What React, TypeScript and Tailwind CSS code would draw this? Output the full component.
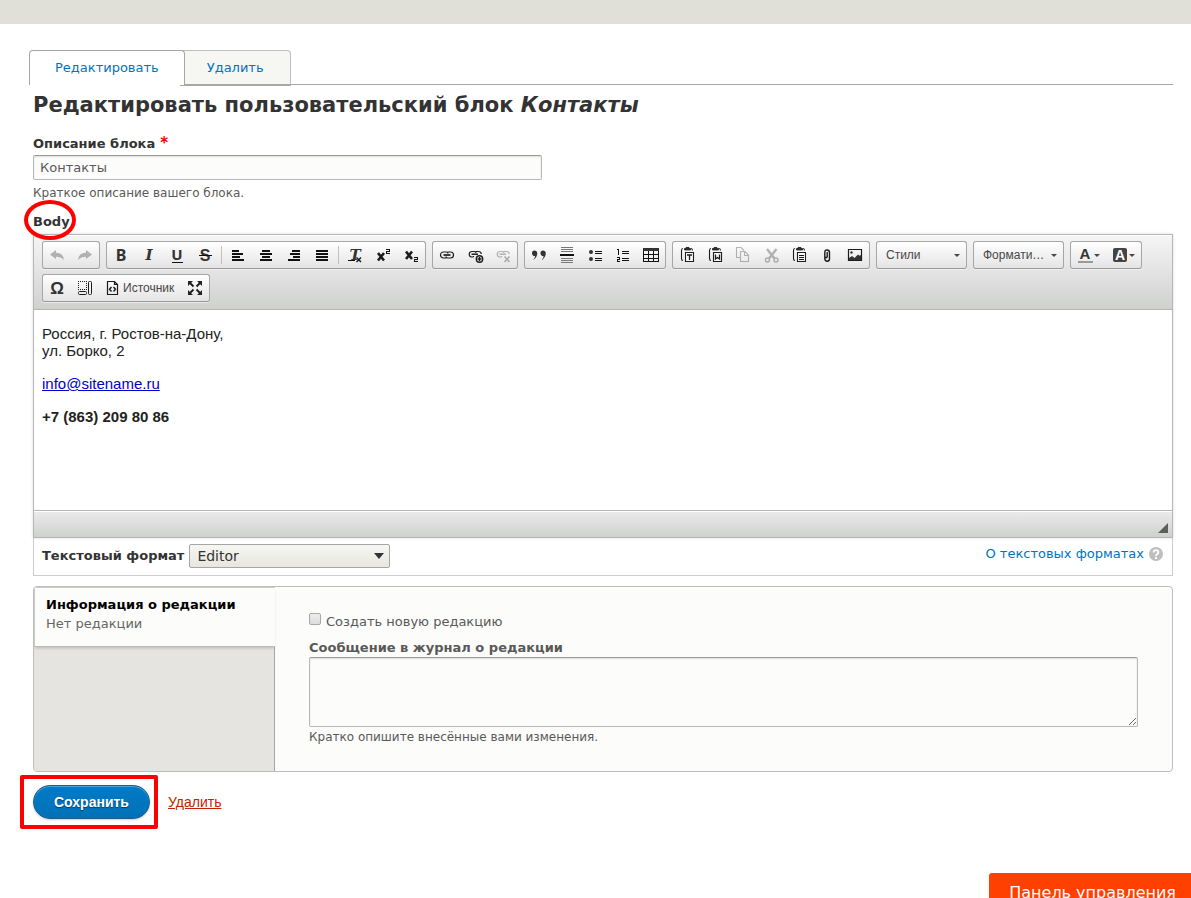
import { useState } from "react";
import type { ReactNode } from "react";
import clsx from "clsx";

type ChildrenProps = { children: ReactNode };

// 16x16 pixel icon used by every toolbar button
function Icon({ children, faded }: ChildrenProps & { faded?: boolean }) {
  return (
    <svg
      viewBox="0 0 16 16"
      className={clsx("size-4 shrink-0 overflow-visible", faded && "opacity-30")}
      fill="none"
      stroke="#1c1c1c"
      aria-hidden="true"
    >
      {children}
    </svg>
  );
}

type Row = [x: number, y: number, w: number, h: number];

// Icons made only from bars
function Bars({ rows, fill = "#111" }: { rows: Row[]; fill?: string }) {
  return (
    <g fill={fill} stroke="none" shapeRendering="crispEdges">
      {rows.map(([x, y, w, h]) => (
        <rect key={`${x}-${y}`} x={x} y={y} width={w} height={h} />
      ))}
    </g>
  );
}

function Glyph({
  x,
  y,
  className,
  children,
}: ChildrenProps & { x: number; y: number; className?: string }) {
  return (
    <text x={x} y={y} stroke="none" textAnchor="middle" className={clsx("fill-[#333]", className)}>
      {children}
    </text>
  );
}

const sansBold = "font-['Liberation_Sans',sans-serif] font-bold";

const linkPath = (
  <>
    <path
      d="M7.5 11H4.500a3 3 0 0 1 0-6h2.500q2 0 2 1.500M8.500 5h3a3 3 0 0 1 0 6H9q-2 0-2-1.500"
      strokeWidth="1.200"
    />
    <path d="M4.500 8h7" strokeWidth="1.700" />
  </>
);

const smallLinkPath = (
  <>
    <path d="M6.500 10H4.500a2.800 2.800 0 0 1 0-5.500h2.500q2 0 2 1.500M8.500 4.500h3A2.800 2.800 0 0 1 14.300 7M6.500 10V9" strokeWidth="1.200" />
    <path d="M4.500 7.200h6.500" strokeWidth="1.500" />
  </>
);

const clipboard = (
  <>
    <path d="M4 1.500q-1.500 0-1.500 2v8q0 2 1.500 2M12 1.500q1.500 0 1.500 2" strokeWidth="1.100" />
    <path d="M5.500 3V1.500h1.500v-1h3v1h1.500V3z" fill="#333" strokeWidth=".8" />
  </>
);

const icons = {
  undo: (
    <path
      d="M1 7.500 7 3v2.700c4.500 0 7.300 2.300 8 7.300-2-2.500-4.500-3.200-8-3.200V12z"
      fill="#1c1c1c"
      stroke="none"
    />
  ),
  redo: (
    <path
      d="M15 7.500 9 3v2.700C4.500 5.700 1.700 8 1 13c2-2.500 4.500-3.200 8-3.200V12z"
      fill="#1c1c1c"
      stroke="none"
    />
  ),
  bold: (
    <Glyph x={8} y={14} className="font-['Noto_Sans',sans-serif] text-[16px] font-bold">
      B
    </Glyph>
  ),
  italic: (
    <Glyph x={8} y={13} className="font-['DejaVu_Serif',serif] text-[15px] font-bold italic">
      I
    </Glyph>
  ),
  underline: (
    <>
      <Glyph x={8} y={13} className="font-['Noto_Sans',sans-serif] text-[15px] font-bold">
        U
      </Glyph>
      <Bars rows={[[3, 15, 11, 1]]} />
    </>
  ),
  strike: (
    <>
      <Glyph x={8} y={14} className={clsx(sansBold, "text-[16px]")}>
        S
      </Glyph>
      <Bars rows={[[2, 8, 13, 1]]} />
    </>
  ),
  left: <Bars rows={[[2, 3, 7, 2], [2, 6, 11, 2], [2, 9, 8, 2], [2, 12, 12, 2]]} />,
  center: <Bars rows={[[4, 3, 8, 2], [2, 6, 12, 2], [4, 9, 8, 2], [2, 12, 12, 2]]} />,
  right: <Bars rows={[[6, 3, 8, 2], [4, 6, 10, 2], [7, 9, 7, 2], [2, 12, 12, 2]]} />,
  justify: <Bars rows={[[2, 3, 12, 2], [2, 6, 12, 2], [2, 9, 12, 2], [2, 12, 12, 2]]} />,
  clear: (
    <>
      <Glyph x={8} y={13} className="font-['DejaVu_Serif',serif] text-[15px] font-bold italic">
        T
      </Glyph>
      <Bars rows={[[1, 13, 7, 1]]} />
      <path d="m9.500 10.500 4.500 4.500M14 10.500 9.500 15" strokeWidth="1.500" />
    </>
  ),
  sup: (
    <>
      <path d="m3 6 6 7.500M9 6l-6 7.500" strokeWidth="2.600" />
      <Bars rows={[[11, 2, 4, 1], [14, 3, 1, 1], [11, 4, 4, 1], [11, 5, 1, 1], [11, 6, 4, 1]]} />
    </>
  ),
  sub: (
    <>
      <path d="m3 4.500 6 7.500M9 4.500l-6 7.500" strokeWidth="2.600" />
      <Bars rows={[[11, 10, 4, 1], [14, 11, 1, 1], [11, 12, 4, 1], [11, 13, 1, 1], [11, 14, 4, 1]]} />
    </>
  ),
  link: linkPath,
  anchor: (
    <>
      {smallLinkPath}
      <circle cx="12.500" cy="12" r="3.200" fill="#eee" strokeWidth="1.400" />
      <path d="M12.500 10v4M10.500 12h4" strokeWidth="1.500" />
    </>
  ),
  unlink: (
    <>
      {smallLinkPath}
      <path d="m9.500 9.500 5 5.500M14.500 9.500l-5 5.500" strokeWidth="1.700" />
    </>
  ),
  quote: (
    <path
      d="M1 6.200a2.600 2.600 0 1 1 5.300-.2c0 3-1.700 5.800-4.300 7 1.500-1.500 2-2.800 2-4C2.300 9.200 1 8 1 6.200zm8.500 0a2.600 2.600 0 1 1 5.300-.2c0 3-1.700 5.800-4.300 7 1.500-1.500 2-2.800 2-4-1.700.2-3-1-3-2.800z"
      fill="#333"
      stroke="none"
    />
  ),
  rule: (
    <>
      <Bars rows={[[2, 0, 12, 1], [2, 2, 12, 1], [2, 4, 12, 1], [2, 11, 12, 1], [2, 13, 12, 1], [2, 15, 12, 1]]} fill="#777" />
      <Bars rows={[[1, 7, 14, 2]]} />
    </>
  ),
  bullets: (
    <>
      <path d="M4 3a2 2 0 1 1 0 4 2 2 0 0 1 0-4zm0 7a2 2 0 1 1 0 4 2 2 0 0 1 0-4z" fill="#333" stroke="none" />
      <Bars rows={[[8, 4, 7, 1], [8, 6, 7, 1], [8, 11, 7, 1], [8, 13, 7, 1]]} />
    </>
  ),
  numbers: (
    <Bars
      rows={[
        [2, 2, 2, 1], [3, 3, 1, 5], [2, 10, 3, 1], [4, 11, 1, 1], [2, 12, 3, 1], [2, 13, 1, 1], [2, 14, 3, 1],
        [7, 4, 7, 1], [7, 6, 7, 1], [7, 11, 7, 1], [7, 13, 7, 1],
      ]}
    />
  ),
  table: (
    <>
      <Bars rows={[[0, 1, 16, 3]]} fill="#333" />
      <Bars
        rows={[
          [0, 4, 1, 11], [5, 4, 1, 11], [10, 4, 1, 11], [15, 4, 1, 11],
          [1, 7, 14, 1], [1, 11, 14, 1], [1, 14, 14, 1],
        ]}
      />
    </>
  ),
  pasteText: (
    <>
      {clipboard}
      <path d="M6.500 5.500h8v9h-8z" fill="#f8f8f8" strokeWidth="1.100" />
      <path d="M8 8h5M10.500 8v5" strokeWidth="1.300" />
    </>
  ),
  pasteWord: (
    <>
      {clipboard}
      <path d="M6.500 5.500h8v9h-8z" fill="#f8f8f8" strokeWidth="1.100" />
      <path d="M8.500 7.500v4.500l2-1.500 2 1.500V7.500" strokeWidth="1.300" />
    </>
  ),
  copy: (
    <path d="M5 10.500H1.500v-10H6l3 3M5.500 4.500v10h8V8L10 4.500zM9.500 4.500v4h4" strokeWidth="1.100" />
  ),
  cut: (
    <>
      <path d="m4 2 7.500 9.500M13.500 2 6 11.500" strokeWidth="2.400" />
      <circle cx="4.500" cy="13" r="2" strokeWidth="1.400" />
      <circle cx="13" cy="13" r="2" strokeWidth="1.400" />
    </>
  ),
  paste: (
    <>
      {clipboard}
      <path d="M6.500 5.500h8v9h-8z" fill="#f8f8f8" strokeWidth="1.100" />
      <Bars rows={[[8, 8, 5, 1], [8, 10, 5, 1], [8, 12, 5, 1]]} />
    </>
  ),
  attach: (
    <path
      d="M8.200 5v5.500M10.500 4.500v7q0 2.800-2.300 2.800t-2.400-2.800V5.500q0-2.500 2.300-2.500t2.400 2.500M8.200 10.500H6"
      strokeWidth="1.400"
    />
  ),
  image: (
    <>
      <path d="M1.500 2.500h13v11h-13z" strokeWidth="1.200" />
      <circle cx="4.500" cy="5.500" r="1.200" fill="#333" stroke="none" />
      <path d="M2 13v-2l3-2 2.500 2L11 7.500l1.500 1.200L14 8v5z" fill="#333" stroke="none" />
    </>
  ),
  omega: (
    <Glyph x={8} y={14} className={clsx(sansBold, "text-[17px]")}>
      Ω
    </Glyph>
  ),
  blocks: (
    <>
      <path d="M1 1.500h9M1 3.500h1M9 3.500h1M1 5.500h1M9 5.500h1M1 7.500h1M9 7.500h1M1 9.500h9" strokeDasharray="1 1" shapeRendering="crispEdges" />
      <rect x="1.500" y="11.500" width="8" height="3" rx="1" />
      <rect x="11.500" y="1.500" width="3" height="13" rx="1" />
    </>
  ),
  source: (
    <>
      <path d="M2.500 1.500h7l3 3v10h-10zM9.500 1.500v3h3" strokeWidth="1.200" />
      <path d="M6.500 7 4.500 9.300l2 2.200M8.500 7l2 2.300-2 2.200" strokeWidth="1.400" />
    </>
  ),
  maximize: (
    <>
      <path d="m2 2 4.500 4.500M14 2 9.500 6.500M2 14l4.500-4.500M14 14 9.500 9.500" strokeWidth="1.800" />
      <path d="M1 1h5L1 6zM15 1h-5l5 5zM1 15h5l-5-5zM15 15h-5l5-5z" fill="#222" stroke="none" />
    </>
  ),
};

type IconName = keyof typeof icons;

function ToolButton({ icon, label, disabled }: { icon: IconName; label: string; disabled?: boolean }) {
  return (
    <button
      type="button"
      aria-label={label}
      title={label}
      disabled={disabled}
      className="flex h-[26px] w-7 items-center justify-center"
    >
      <Icon faded={disabled}>{icons[icon]}</Icon>
    </button>
  );
}

function ToolGroup({ children }: ChildrenProps) {
  return (
    <div className="flex h-7 items-center rounded-[3px] border border-[#a6a6a6] border-b-[#979797] bg-linear-to-b from-white to-[#e4e4e4] shadow-[0_1px_0_rgba(255,255,255,0.5)]">
      {children}
    </div>
  );
}

function Separator() {
  return <span className="mx-[2px] h-[18px] w-px bg-[#c0c0c0]" />;
}

function Caret() {
  return (
    <svg viewBox="0 0 6 3" className="h-[3px] w-[6px] shrink-0" aria-hidden="true">
      <path d="M0 0h6L3 3z" fill="#474747" />
    </svg>
  );
}

function Combo({ label, value }: { label: string; value: string }) {
  return (
    <ToolGroup>
      <div className="grid w-[89px] items-center">
        <select
          aria-label={label}
          className="col-start-1 row-start-1 h-[26px] w-full appearance-none pl-[9px] font-['Liberation_Sans',sans-serif] text-[12px] text-[#474747]"
        >
          <option>{value}</option>
        </select>
        <span className="pointer-events-none col-start-1 row-start-1 mr-[6px] justify-self-end">
          <Caret />
        </span>
      </div>
    </ToolGroup>
  );
}

function Toolbar() {
  return (
    <div
      role="toolbar"
      aria-label="Панель инструментов"
      className="flex flex-wrap gap-x-[6px] gap-y-[5px] border-b border-[#b6b6b6] bg-linear-to-b from-[#f5f5f5] to-[#cfd1cf] px-2 pt-[6px] pb-[7px] shadow-[inset_0_1px_0_#fff]"
    >
      <ToolGroup>
        <ToolButton icon="undo" label="Отменить" disabled />
        <ToolButton icon="redo" label="Повторить" disabled />
      </ToolGroup>
      <ToolGroup>
        <ToolButton icon="bold" label="Полужирный" />
        <ToolButton icon="italic" label="Курсив" />
        <ToolButton icon="underline" label="Подчеркнутый" />
        <ToolButton icon="strike" label="Зачеркнутый" />
        <Separator />
        <ToolButton icon="left" label="По левому краю" />
        <ToolButton icon="center" label="По центру" />
        <ToolButton icon="right" label="По правому краю" />
        <ToolButton icon="justify" label="По ширине" />
        <Separator />
        <ToolButton icon="clear" label="Убрать форматирование" />
        <ToolButton icon="sup" label="Надстрочный индекс" />
        <ToolButton icon="sub" label="Подстрочный индекс" />
      </ToolGroup>
      <ToolGroup>
        <ToolButton icon="link" label="Ссылка" />
        <ToolButton icon="anchor" label="Добавить ссылку" />
        <ToolButton icon="unlink" label="Убрать ссылку" disabled />
      </ToolGroup>
      <ToolGroup>
        <ToolButton icon="quote" label="Цитата" />
        <ToolButton icon="rule" label="Горизонтальная линия" />
        <ToolButton icon="bullets" label="Маркированный список" />
        <ToolButton icon="numbers" label="Нумерованный список" />
        <ToolButton icon="table" label="Таблица" />
      </ToolGroup>
      <ToolGroup>
        <ToolButton icon="pasteText" label="Вставить только текст" />
        <ToolButton icon="pasteWord" label="Вставить из Word" />
        <ToolButton icon="copy" label="Копировать" disabled />
        <ToolButton icon="cut" label="Вырезать" disabled />
        <ToolButton icon="paste" label="Вставить" />
        <ToolButton icon="attach" label="Файл" />
        <ToolButton icon="image" label="Изображение" />
      </ToolGroup>
      <Combo label="Стили" value="Стили" />
      <Combo label="Форматирование" value="Формати…" />
      <ToolGroup>
        <button type="button" aria-label="Цвет текста" className="flex h-[26px] w-[35px] items-center gap-[1px] pl-[6px]">
          <Icon>
            <Glyph x={8} y={12} className={clsx(sansBold, "text-[15px]")}>
              A
            </Glyph>
            <Bars rows={[[1, 14, 15, 2]]} fill="#999" />
          </Icon>
          <Caret />
        </button>
        <button type="button" aria-label="Цвет фона" className="flex h-[26px] w-[35px] items-center gap-[1px] pl-[6px]">
          <Icon>
            <rect x="1" y="1" width="14" height="14" rx="2" fill="#444" stroke="none" />
            <text x="8" y="13" textAnchor="middle" stroke="none" className={clsx(sansBold, "fill-white text-[14px]")}>
              A
            </text>
          </Icon>
          <Caret />
        </button>
      </ToolGroup>
      <ToolGroup>
        <ToolButton icon="omega" label="Специальный символ" />
        <ToolButton icon="blocks" label="Отображать блоки" />
        <button
          type="button"
          className="flex h-[26px] w-[82px] items-center gap-[2px] pl-[6px] font-['Liberation_Sans',sans-serif] text-[12px] text-[#474747]"
        >
          <Icon>{icons.source}</Icon>
          Источник
        </button>
        <ToolButton icon="maximize" label="Развернуть" />
      </ToolGroup>
    </div>
  );
}

function Editor() {
  return (
    <div className="border border-[#b6b6b6] shadow-[0_0_3px_rgba(0,0,0,0.15)]">
      <Toolbar />
      <div
        contentEditable
        suppressContentEditableWarning
        role="textbox"
        aria-labelledby="body-label"
        className="flex min-h-[200px] flex-col gap-4 bg-white px-2 py-[15px] font-['Liberation_Sans',sans-serif] text-[15px] leading-[17px] text-[#222]"
      >
        <p>
          Россия, г. Ростов-на-Дону,
          <br />
          ул. Борко, 2
        </p>
        <p>
          <a href="mailto:info@sitename.ru" className="text-[#0000cc] underline">
            info@sitename.ru
          </a>
        </p>
        <p className="font-bold">+7 (863) 209 80 86</p>
      </div>
      <div className="flex h-[27px] items-end justify-end border-t border-[#b6b6b6] bg-linear-to-b from-[#ebebeb] to-[#cfd1cf] pr-1 pb-1 shadow-[inset_0_1px_0_#fff]">
        <svg viewBox="0 0 10 10" className="size-[10px]" aria-hidden="true">
          <path d="M10 0v10H0z" fill="#5e5e5e" />
        </svg>
      </div>
    </div>
  );
}

function Tabs() {
  return (
    <nav className="flex h-[35px] border-b border-[#a6a6a6] text-[13px] text-[#0074bd]">
      <a
        href="#edit"
        className="relative z-10 -mb-px flex items-center rounded-t-[4px] border border-b-0 border-[#a6a6a6] bg-white px-[25px]"
      >
        Редактировать
      </a>
      <a
        href="#delete"
        className="-mb-[2px] -ml-[5px] flex items-center rounded-tr-[4px] border border-b-2 border-[#bfbfbf] border-b-[#a6a6a6] bg-[#f6f6f3] px-[26px]"
      >
        Удалить
      </a>
    </nav>
  );
}

function RevisionInfo() {
  const [newRevision, setNewRevision] = useState(false);

  return (
    <section className="mt-[10px] flex min-h-[186px] overflow-hidden rounded-[4px] border border-[#bdbdbd] bg-[#fcfcfa]">
      <div className="w-[241px] shrink-0 bg-linear-to-l from-[#a6a6a6] from-[0.5%] to-[#e6e4e0] to-[0.5%]">
        <button
          type="button"
          className="block h-[60px] w-full border-t border-b border-l border-[#ccc] border-b-[#bbb] bg-[#fcfcfa] pb-[6px] pl-[11px] text-left text-[13px] leading-[19px] shadow-[0_2px_3px_-1px_rgba(0,0,0,0.2)]"
        >
          <strong className="block text-black">Информация о редакции</strong>
          <span className="block text-[#666]">Нет редакции</span>
        </button>
      </div>
      <div className="min-w-0 flex-1 px-[34px] pt-[25px] pb-6 text-[#595959]">
        <div className="flex items-start gap-[5px]">
          <input
            id="new-revision"
            type="checkbox"
            checked={newRevision}
            onChange={(e) => setNewRevision(e.target.checked)}
            className="mt-[1px] size-3 appearance-none rounded-[2px] border border-[#a8a8a8] bg-linear-to-b from-[#ededed] to-[#dcdcdc] checked:bg-[#0074bd]"
          />
          <label htmlFor="new-revision" className="text-[13px] leading-[20px]">
            Создать новую редакцию
          </label>
        </div>
        <label htmlFor="revision-log" className="mt-[7px] block text-[13px] leading-[18px] font-bold">
          Сообщение в журнал о редакции
        </label>
        <textarea
          id="revision-log"
          className="block h-[70px] w-full resize-y rounded-[2px] border border-[#b8b8b8] border-t-[#999] bg-[#fcfcfa] shadow-[inset_0_1px_2px_rgba(0,0,0,0.125)]"
        />
        <p className="mt-[2px] text-[12px] leading-4">Кратко опишите внесённые вами изменения.</p>
      </div>
    </section>
  );
}

export default function App() {
  const [description, setDescription] = useState("Контакты");

  return (
    <div className="relative flex min-h-screen flex-col overflow-hidden bg-white font-['DejaVu_Sans',sans-serif] text-[#333]">
      <header className="h-6 bg-[#e0e0d8]" />

      <main className="pt-[26px] pr-[18px] pl-[29px]">
        <Tabs />

        <form className="pl-1" onSubmit={(e) => e.preventDefault()}>
          <h1 className="mt-[6px] text-[21px] leading-7 font-bold">
            Редактировать пользовательский блок <em>Контакты</em>
          </h1>

          <label htmlFor="description" className="mt-[15px] flex h-5 gap-[5px] text-[13px] leading-5 font-bold">
            Описание блока
            <span className="text-[15px] leading-[18px] text-[#e00]">*</span>
          </label>
          <input
            id="description"
            type="text"
            value={description}
            onChange={(e) => setDescription(e.target.value)}
            className="mt-px block h-[25px] w-[509px] max-w-full rounded-[2px] border border-[#b8b8b8] border-t-[#999] bg-[#fcfcfa] px-[6px] text-[13px] text-[#595959] shadow-[inset_0_1px_2px_rgba(0,0,0,0.125)]"
          />
          <p className="mt-[5px] text-[12px] leading-4 text-[#595959]">Краткое описание вашего блока.</p>

          <div className="relative mt-3 mb-[3px] w-fit text-[13px] leading-[18px] font-bold">
            <span id="body-label">Body</span>
            <span className="pointer-events-none absolute -top-[13px] -left-[9px] z-10 h-10 w-[52px] rounded-[50%] border-4 border-[#f00]" />
          </div>

          <Editor />

          <div className="flex h-[38px] items-start justify-between border border-t-0 border-[#ccc] px-2 pt-[6px] text-[13px]">
            <div className="flex items-center gap-[5px]">
              <label htmlFor="format" className="leading-6 font-bold">
                Текстовый формат
              </label>
              <div className="grid w-[201px] items-center">
                <select
                  id="format"
                  className="col-start-1 row-start-1 h-6 w-full appearance-none rounded-[2px] border border-[#a6a6a6] bg-linear-to-b from-[#f6f6f3] to-[#e7e7df] pl-[7px] text-[14px] text-[#333]"
                >
                  <option>Editor</option>
                </select>
                <svg
                  viewBox="0 0 10 6"
                  className="pointer-events-none col-start-1 row-start-1 mr-[6px] h-[6px] w-[10px] justify-self-end"
                  aria-hidden="true"
                >
                  <path d="M0 0h10L5 6z" fill="#333" />
                </svg>
              </div>
            </div>
            <a href="#formats" className="flex items-center gap-[5px] pr-px text-[#0074bd]">
              О текстовых форматах
              <svg viewBox="0 0 14 14" className="size-[14px]" aria-hidden="true">
                <circle cx="7" cy="7" r="7" fill="#bebebe" />
                <path d="M4.600 5.400q0-2.200 2.400-2.200t2.400 2q0 1-1.200 1.800Q7 7.800 7 9" fill="none" stroke="#fff" strokeWidth="1.800" />
                <rect x="6" y="10" width="2" height="2" fill="#fff" />
              </svg>
            </a>
          </div>

          <RevisionInfo />

          <div className="mt-[13px] flex items-center gap-[18px] font-['Liberation_Sans',sans-serif] text-[14px]">
            <div className="relative">
              <button
                type="submit"
                className="block h-[34px] rounded-full border border-[#1e5c90] bg-linear-to-b from-[#007bc6] to-[#0071b8] px-5 font-bold text-white shadow-[inset_0_1px_0_rgba(255,255,255,0.3),0_1px_2px_rgba(0,0,0,0.2)] text-shadow-[0_1px_1px_rgba(0,0,0,0.5)]"
              >
                Сохранить
              </button>
              <span className="pointer-events-none absolute -top-[10px] -left-[13px] h-[54px] w-[138px] rounded-[2px] border-4 border-[#f00]" />
            </div>
            <a href="#delete" className="text-[#c72100] underline">
              Удалить
            </a>
          </div>
        </form>
      </main>

      <button
        type="button"
        className="absolute right-0 -bottom-[15px] h-10 rounded-tl-[3px] bg-[#ff4000] pr-[15px] pl-5 text-[16px] text-white"
      >
        Панель управления
      </button>
    </div>
  );
}
